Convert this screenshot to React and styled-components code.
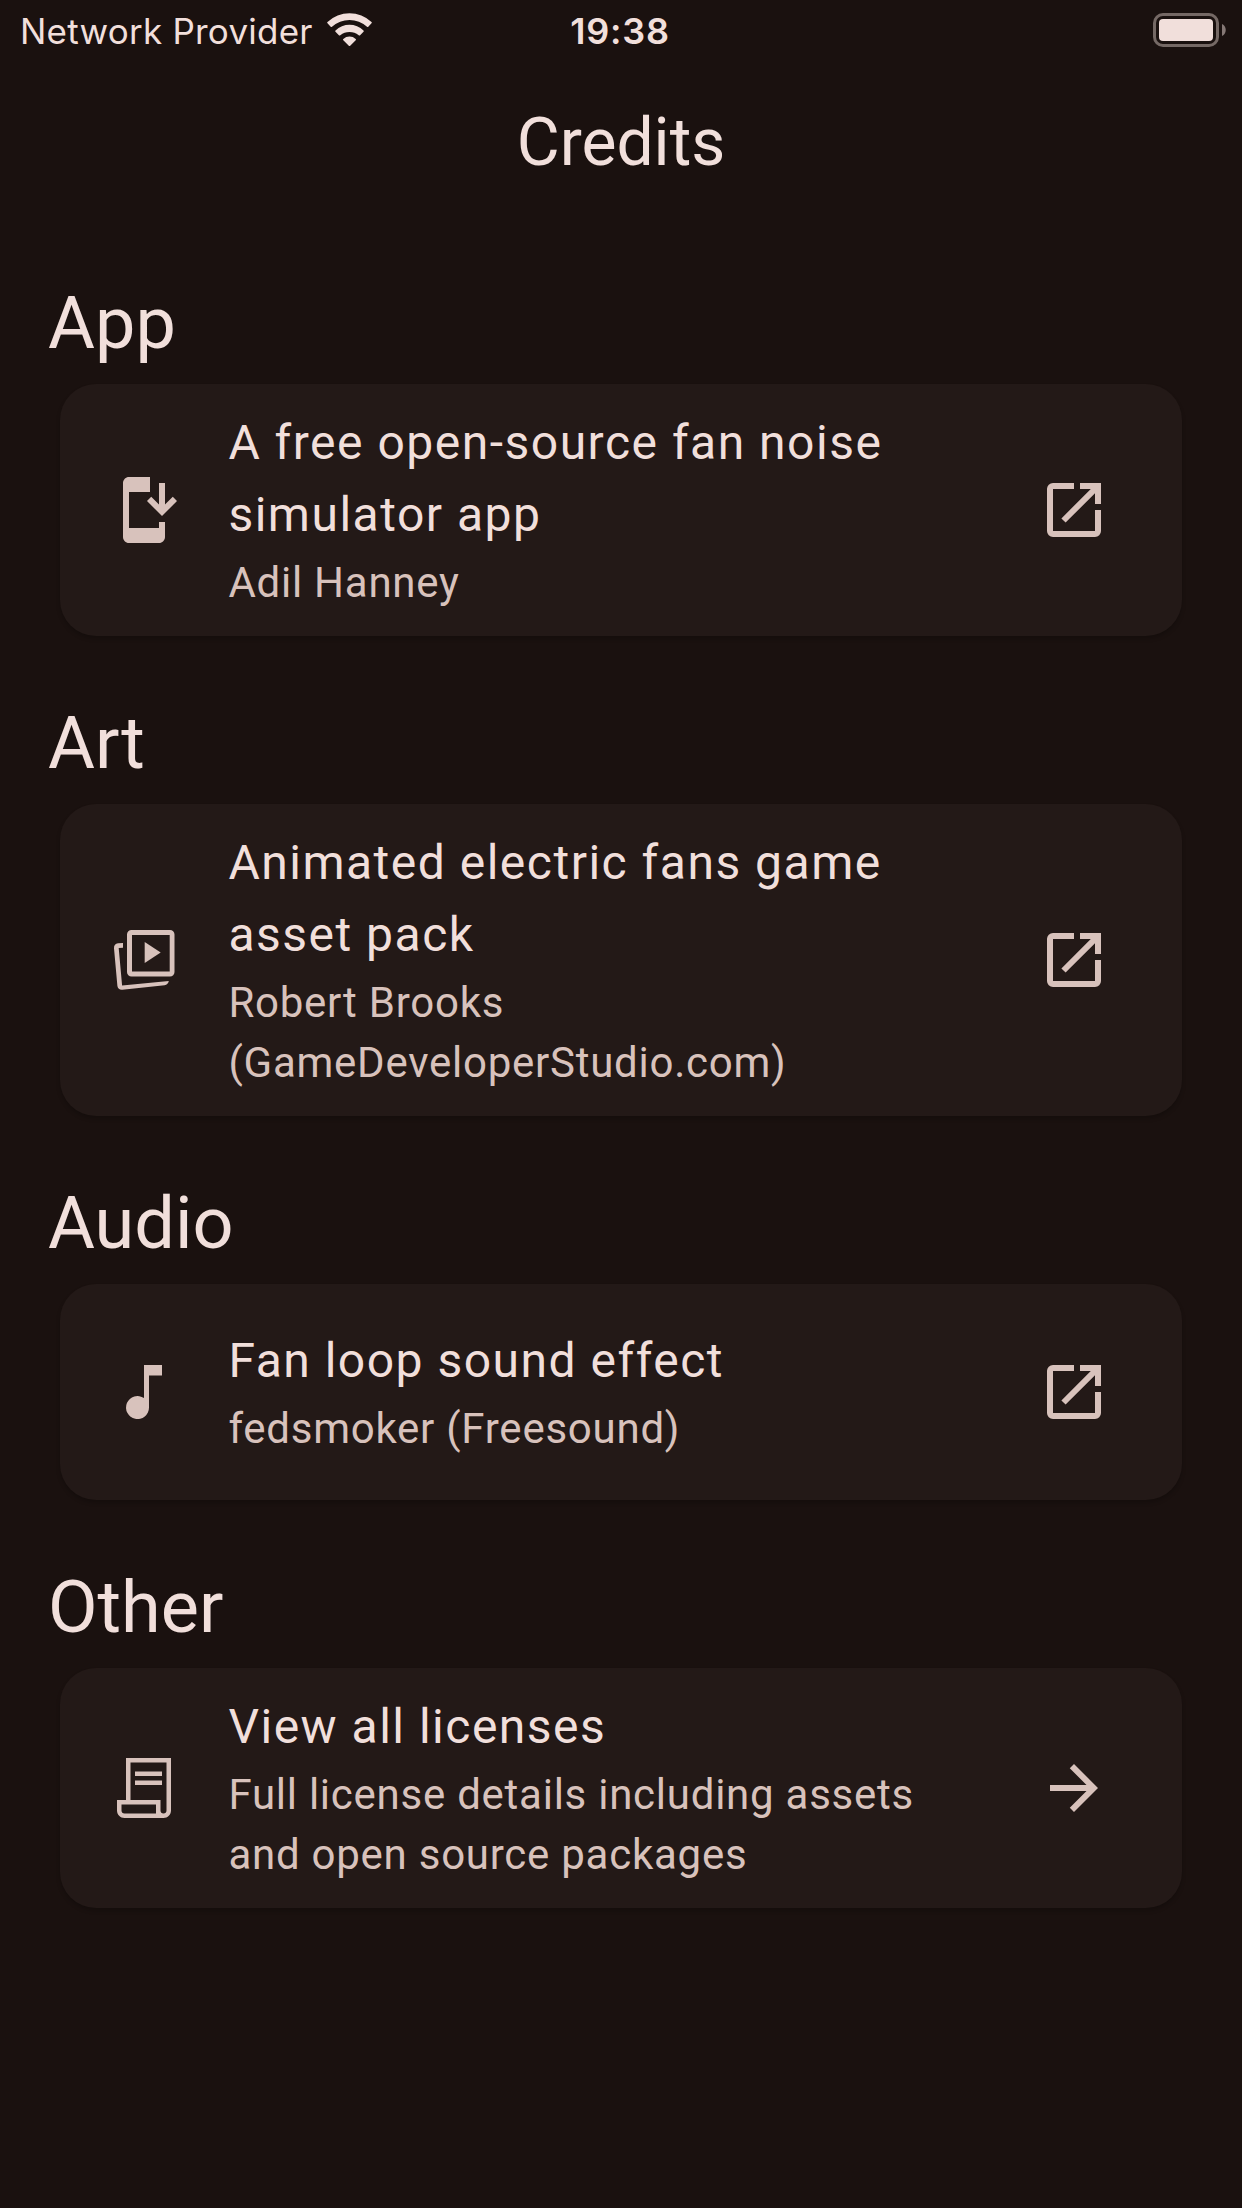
import React from 'react';
import styled, { createGlobalStyle } from 'styled-components';

const GlobalStyle = createGlobalStyle`
  html, body { margin: 0; background: #1a110f; }
  * { box-sizing: border-box; }
`;

const Screen = styled.div`
  width: 1242px;
  height: 2208px;
  overflow: hidden;
  display: flex;
  flex-direction: column;
  background: #1a110f;
  color: #f1dfdb;
  font-family: Roboto, sans-serif;
`;

const StatusBar = styled.header`
  height: 60px;
  flex: none;
  display: grid;
  grid-template-columns: 1fr auto 1fr;
  padding: 0 16px 0 20px;
  font-family: Inter, sans-serif;
`;

const Carrier = styled.div`
  display: flex;
  align-items: flex-start;
  gap: 14px;
  font-size: 35px;
  line-height: 62px;
  letter-spacing: 0.24px;
  white-space: nowrap;
`;

const Clock = styled.div`
  margin: 0 1px 0 -5px;
  font-size: 36px;
  font-weight: 600;
  line-height: 62px;
  letter-spacing: 0.8px;
`;

const WifiIcon = styled.svg`
  width: 46px;
  height: 34px;
  margin-top: 13px;
  flex: none;
`;

const BatteryIcon = styled.svg`
  width: 73px;
  height: 34px;
  margin-top: 13px;
  justify-self: end;
`;

const TitleBar = styled.div`
  height: 168px;
  padding-bottom: 2px;
  flex: none;
  display: flex;
  justify-content: center;
  align-items: center;
`;

const PageTitle = styled.h1`
  margin: 0;
  font-size: 66px;
  font-weight: 400;
  line-height: 84px;
`;

const Sections = styled.main`
  padding: 48px 48px 0;
  display: flex;
  flex-direction: column;
  gap: 60px;
`;

const Section = styled.section`
  display: flex;
  flex-direction: column;
  gap: 12px;
`;

const SectionTitle = styled.h2`
  margin: 0;
  font-size: 72px;
  font-weight: 400;
  line-height: 96px;
`;

const Card = styled.div`
  margin: 0 12px;
  min-height: 216px;
  padding: 24px 72px 24px 48px;
  display: flex;
  align-items: center;
  border-radius: 36px;
  background: #231917;
  box-shadow: 0 3px 4px rgba(0, 0, 0, 0.2);
`;

const CardText = styled.div`
  flex: 1;
  display: flex;
  flex-direction: column;
  gap: 2px;
  margin: -1px 48px -1px 48.4px;
`;

const CardTitle = styled.div`
  font-size: 48px;
  line-height: 72px;
  letter-spacing: 1.5px;
  white-space: pre-line;
`;

const CardSubtitle = styled.div`
  font-size: 42px;
  line-height: 60px;
  letter-spacing: 0.75px;
  color: #d8c2bc;
  white-space: pre-line;
`;

const Glyph = styled.svg`
  width: 72px;
  height: 72px;
  flex: none;
  fill: #d8c2bc;
`;

const InstallIcon = () => (
  <Glyph viewBox="0 0 24 24">
    <path d="M17 18H7V6h7V1H7c-1.1 0-2 .9-2 2v18c0 1.1.9 2 2 2h10c1.1 0 2-.9 2-2v-5h-2v2z" />
    <path d="M18 14l5-5-1.41-1.41L19 10.17V3h-2v7.17l-2.59-2.58L13 9z" />
  </Glyph>
);

const AnimationIcon = () => (
  <Glyph viewBox="0 0 72 72">
    <path fillRule="evenodd" d="M23.500 6h38.500a4.500 4.500 0 0 1 4.500 4.500v37.500a4.500 4.500 0 0 1-4.500 4.500h-38.500a4.500 4.500 0 0 1-4.500-4.500v-37.500a4.500 4.500 0 0 1 4.500-4.500zM24 11v36.500h37.700v-36.500z" />
    <path d="M36.700 18v21l16-10.500z" />
    <path d="M15 19v4.700l-4.300.400 3.400 37.400 46.700-4.400c-.3 2.200-1.900 3.900-4.200 4.100l-42.300 4.500c-2.500.3-4.600-1.300-4.900-3.800L6 24.200c-.2-2.500 1.500-4.700 4-4.900z" />
  </Glyph>
);

const NoteIcon = () => (
  <Glyph viewBox="0 0 72 72">
    <path d="M36 9h18v10.500H41V51.500A11.500 11.500 0 1 1 36 42z" />
  </Glyph>
);

const LicenseIcon = () => (
  <Glyph viewBox="0 0 72 72">
    <path fillRule="evenodd" d="M18 6h45v52.500c0 4.200-3.300 7.500-7.500 7.500h-39c-4.200 0-7.500-3.300-7.500-7.500V48h9zM22.500 10.500V48h30v10.500c0 2 1.200 3 3 3s3-1 3-3v-48zM13.500 52.500v6c0 2 1.200 3 3 3h31.500v-9z" />
    <path d="M27 19.500h27v4.500H27zM27 28.500h27v4.500H27z" />
  </Glyph>
);

const OpenIcon = () => (
  <Glyph viewBox="0 0 24 24">
    <path d="M5 21a2 2 0 0 1-2-2V5a2 2 0 0 1 2-2h7v2H5v14h14v-7h2v7a2 2 0 0 1-2 2z" />
    <path d="M14 3h7v7h-2V6.400L9.200 16.200l-1.400-1.400L17.600 5H14z" />
  </Glyph>
);

const ArrowIcon = () => (
  <Glyph viewBox="0 0 24 24">
    <path d="M12 4l-1.410 1.410L16.170 11H4v2h12.170l-5.580 5.590L12 20l8-8z" />
  </Glyph>
);

const credits = [
  { heading: 'App', Leading: InstallIcon, Trailing: OpenIcon, title: 'A free open-source fan noise\nsimulator app', subtitle: 'Adil Hanney' },
  { heading: 'Art', Leading: AnimationIcon, Trailing: OpenIcon, title: 'Animated electric fans game\nasset pack', subtitle: 'Robert Brooks\n(GameDeveloperStudio.com)' },
  { heading: 'Audio', Leading: NoteIcon, Trailing: OpenIcon, title: 'Fan loop sound effect', subtitle: 'fedsmoker (Freesound)' },
  { heading: 'Other', Leading: LicenseIcon, Trailing: ArrowIcon, title: 'View all licenses', subtitle: 'Full license details including assets\nand open source packages' },
];

export default function App() {
  return (
    <Screen>
      <GlobalStyle />
      <StatusBar>
        <Carrier>
          Network Provider
          <WifiIcon viewBox="0 0 46 34" fill="#f1dfdb">
            <path d="M.500 8.900A32 32 0 0 1 44.500 8.900Q45.200 9.600 44.500 10.300L41.300 13.700Q40.700 14.300 40 13.700A26 26 0 0 0 5 13.700Q4.300 14.300 3.700 13.700L.500 10.300Q-.200 9.600 .500 8.900z" />
            <path d="M8.500 17.400A20.500 20.500 0 0 1 36.500 17.400Q37.200 18.100 36.500 18.800L33.100 22.200Q32.400 22.900 31.700 22.200A14.500 14.500 0 0 0 13.300 22.200Q12.600 22.900 11.900 22.200L8.500 18.800Q7.800 18.100 8.500 17.400z" />
            <path d="M16.300 25.900A9.500 9.500 0 0 1 28.700 25.900Q29.400 26.600 28.700 27.300L23.200 32.700Q22.500 33.400 21.800 32.700L16.300 27.300Q15.600 26.600 16.300 25.900z" />
          </WifiIcon>
        </Carrier>
        <Clock>19:38</Clock>
        <BatteryIcon viewBox="0 0 73 34">
          <rect x="1.500" y="1.500" width="63" height="31" rx="8.500" fill="none" stroke="#756965" strokeWidth="3" />
          <rect x="6" y="6" width="54" height="22" rx="4" fill="#f1dfdb" />
          <path d="M69 11c5 2 5 10 0 12z" fill="#857875" />
        </BatteryIcon>
      </StatusBar>
      <TitleBar>
        <PageTitle>Credits</PageTitle>
      </TitleBar>
      <Sections>
        {credits.map(({ heading, Leading, Trailing, title, subtitle }) => (
          <Section key={heading}>
            <SectionTitle>{heading}</SectionTitle>
            <Card>
              <Leading />
              <CardText>
                <CardTitle>{title}</CardTitle>
                <CardSubtitle>{subtitle}</CardSubtitle>
              </CardText>
              <Trailing />
            </Card>
          </Section>
        ))}
      </Sections>
    </Screen>
  );
}
